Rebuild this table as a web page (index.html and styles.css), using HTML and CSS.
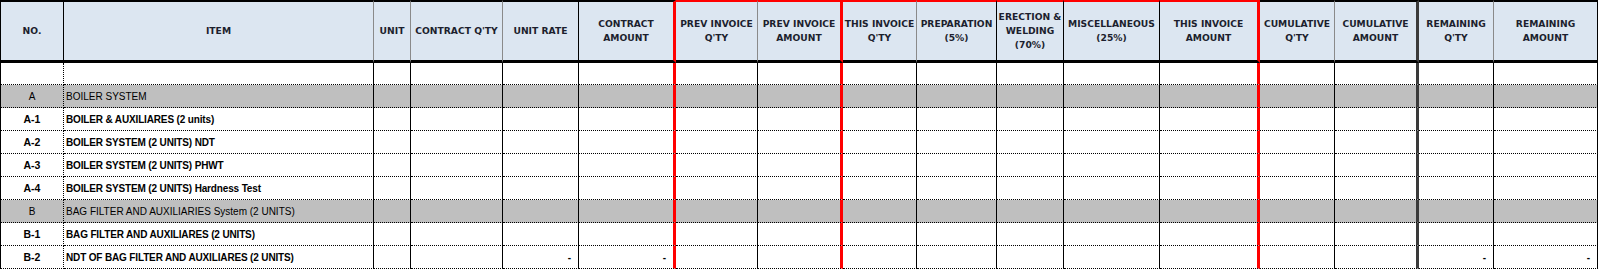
FILE: index.html
```html
<!DOCTYPE html>
<html>
<head>
<meta charset="utf-8">
<link rel="stylesheet" href="styles.css">
</head>
<body>
<div class="sheet">
  <div class="row head">
    <div class="c">NO.</div>
    <div class="c">ITEM</div>
    <div class="c">UNIT</div>
    <div class="c">CONTRACT Q'TY</div>
    <div class="c">UNIT RATE</div>
    <div class="c">CONTRACT<br>AMOUNT</div>
    <div class="c">PREV INVOICE<br>Q'TY</div>
    <div class="c">PREV INVOICE<br>AMOUNT</div>
    <div class="c">THIS INVOICE<br>Q'TY</div>
    <div class="c">PREPARATION<br>(5%)</div>
    <div class="c">ERECTION &amp;<br>WELDING<br>(70%)</div>
    <div class="c">MISCELLANEOUS<br>(25%)</div>
    <div class="c">THIS INVOICE<br>AMOUNT</div>
    <div class="c">CUMULATIVE<br>Q'TY</div>
    <div class="c">CUMULATIVE<br>AMOUNT</div>
    <div class="c">REMAINING<br>Q'TY</div>
    <div class="c">REMAINING<br>AMOUNT</div>
  </div>
  <div class="row blank">
    <div class="c"></div><div class="c"></div><div class="c"></div><div class="c"></div><div class="c"></div><div class="c"></div><div class="c"></div><div class="c"></div><div class="c"></div><div class="c"></div><div class="c"></div><div class="c"></div><div class="c"></div><div class="c"></div><div class="c"></div><div class="c"></div><div class="c"></div>
  </div>
  <div class="row group">
    <div class="c">A</div><div class="c">BOILER SYSTEM</div><div class="c"></div><div class="c"></div><div class="c"></div><div class="c"></div><div class="c"></div><div class="c"></div><div class="c"></div><div class="c"></div><div class="c"></div><div class="c"></div><div class="c"></div><div class="c"></div><div class="c"></div><div class="c"></div><div class="c"></div>
  </div>
  <div class="row item">
    <div class="c">A-1</div><div class="c">BOILER &amp; AUXILIARES (2 units)</div><div class="c"></div><div class="c"></div><div class="c"></div><div class="c"></div><div class="c"></div><div class="c"></div><div class="c"></div><div class="c"></div><div class="c"></div><div class="c"></div><div class="c"></div><div class="c"></div><div class="c"></div><div class="c"></div><div class="c"></div>
  </div>
  <div class="row item">
    <div class="c">A-2</div><div class="c">BOILER SYSTEM (2 UNITS) NDT</div><div class="c"></div><div class="c"></div><div class="c"></div><div class="c"></div><div class="c"></div><div class="c"></div><div class="c"></div><div class="c"></div><div class="c"></div><div class="c"></div><div class="c"></div><div class="c"></div><div class="c"></div><div class="c"></div><div class="c"></div>
  </div>
  <div class="row item">
    <div class="c">A-3</div><div class="c">BOILER SYSTEM (2 UNITS) PHWT</div><div class="c"></div><div class="c"></div><div class="c"></div><div class="c"></div><div class="c"></div><div class="c"></div><div class="c"></div><div class="c"></div><div class="c"></div><div class="c"></div><div class="c"></div><div class="c"></div><div class="c"></div><div class="c"></div><div class="c"></div>
  </div>
  <div class="row item">
    <div class="c">A-4</div><div class="c">BOILER SYSTEM (2 UNITS) Hardness Test</div><div class="c"></div><div class="c"></div><div class="c"></div><div class="c"></div><div class="c"></div><div class="c"></div><div class="c"></div><div class="c"></div><div class="c"></div><div class="c"></div><div class="c"></div><div class="c"></div><div class="c"></div><div class="c"></div><div class="c"></div>
  </div>
  <div class="row group">
    <div class="c">B</div><div class="c">BAG FILTER AND AUXILIARIES System (2 UNITS)</div><div class="c"></div><div class="c"></div><div class="c"></div><div class="c"></div><div class="c"></div><div class="c"></div><div class="c"></div><div class="c"></div><div class="c"></div><div class="c"></div><div class="c"></div><div class="c"></div><div class="c"></div><div class="c"></div><div class="c"></div>
  </div>
  <div class="row item">
    <div class="c">B-1</div><div class="c">BAG FILTER AND AUXILIARES (2 UNITS)</div><div class="c"></div><div class="c"></div><div class="c"></div><div class="c"></div><div class="c"></div><div class="c"></div><div class="c"></div><div class="c"></div><div class="c"></div><div class="c"></div><div class="c"></div><div class="c"></div><div class="c"></div><div class="c"></div><div class="c"></div>
  </div>
  <div class="row item">
    <div class="c">B-2</div><div class="c">NDT OF BAG FILTER AND AUXILIARES (2 UNITS)</div><div class="c"></div><div class="c"></div><div class="c num">-</div><div class="c num">-</div><div class="c"></div><div class="c"></div><div class="c"></div><div class="c"></div><div class="c"></div><div class="c"></div><div class="c"></div><div class="c"></div><div class="c"></div><div class="c num">-</div><div class="c num">-</div>
  </div>
</div>
</body>
</html>
```
FILE: styles.css
```css
html, body {
  margin: 0;
  padding: 0;
  background: #ffffff;
}

.sheet {
  width: 1598px;
  font-family: "Liberation Sans", Arial, sans-serif;
  color: #000;
}

.row {
  display: grid;
  grid-template-columns: 63px 310px 37px 92px 76px 97px 82px 85px 74px 80px 67px 96px 100px 75px 84px 75px 104px;
  border-left: 1px solid #000;
  height: 23px;
}

.c {
  box-sizing: border-box;
  border-right: 1px solid #000;
  border-bottom: 1px dotted #000;
  display: flex;
  align-items: center;
  font-size: 10px;
  white-space: nowrap;
  overflow: hidden;
}

/* red group borders */
.c:nth-child(6),
.c:nth-child(8),
.c:nth-child(13) {
  border-right: 3px solid #ff0000;
}

.c:nth-child(15) {
  border-right: 3px solid #3a3a3a;
}

/* header */
.head {
  height: 63px;
}

.head .c {
  background: #dce6f1;
  border-top: 2px solid #000;
  border-bottom: 3px solid #000;
  border-right-color: #8a8a8a;
  justify-content: center;
  text-align: center;
  font-family: "DejaVu Sans", Verdana, sans-serif;
  font-weight: bold;
  font-size: 9.2px;
  line-height: 14px;
  color: #1c1f2e;
}

.head .c:nth-child(1),
.head .c:nth-child(5),
.head .c:nth-child(10),
.head .c:nth-child(11),
.head .c:nth-child(12),
.head .c:nth-child(17) {
  border-right-color: #000;
}

.head .c:nth-child(6),
.head .c:nth-child(8),
.head .c:nth-child(13) {
  border-right-color: #ff0000;
}

.head .c:nth-child(15) {
  border-right-color: #3a3a3a;
}

.head .c:nth-child(n+7):nth-child(-n+13) {
  border-top-color: #ff0000;
}

.blank {
  height: 22px;
}

/* body */
.row:not(.head) .c:nth-child(1) {
  border-right: 1px dotted #000;
  justify-content: center;
}

.row:not(.head) .c:nth-child(2) {
  padding-left: 2px;
}

.item .c {
  font-weight: bold;
}

.item .c:nth-child(2) {
  letter-spacing: -0.15px;
}

.item .c:nth-child(1) {
  font-size: 10.5px;
}

.group .c {
  background: #bfbfbf;
  font-weight: normal;
}

.c.num {
  justify-content: flex-end;
  padding-right: 7px;
  font-weight: bold;
}
```
